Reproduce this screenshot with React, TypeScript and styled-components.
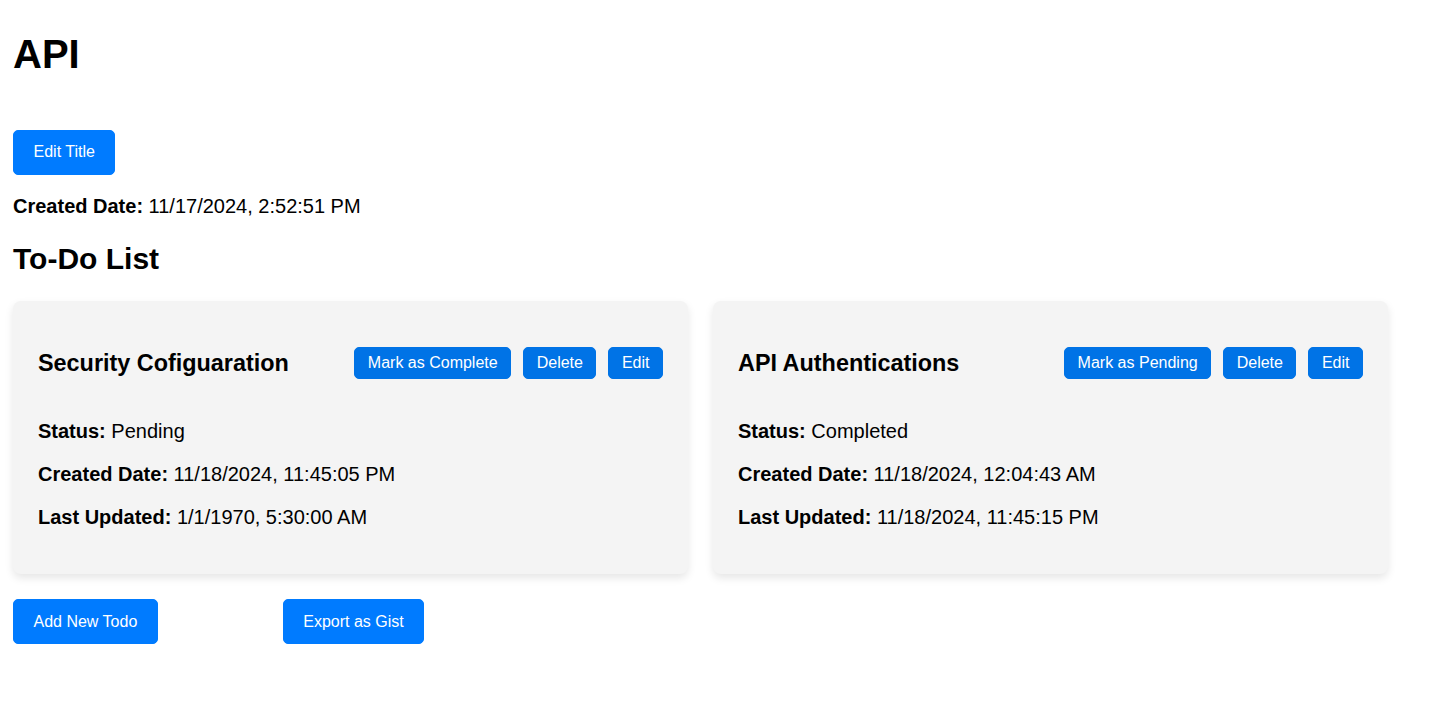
import styled, { createGlobalStyle } from "styled-components";

type Todo = {
  id: number;
  title: string;
  status: "Pending" | "Completed";
  created: string;
  updated: string;
};

const todos: Todo[] = [
  {
    id: 1,
    title: "Security Cofiguaration",
    status: "Pending",
    created: "11/18/2024, 11:45:05 PM",
    updated: "1/1/1970, 5:30:00 AM",
  },
  {
    id: 2,
    title: "API Authentications",
    status: "Completed",
    created: "11/18/2024, 12:04:43 AM",
    updated: "11/18/2024, 11:45:15 PM",
  },
];

function App() {
  return (
    <>
      <GlobalStyle />
      <Page>
        <Title>API</Title>
        <TitleActions>
          <PrimaryButton>Edit Title</PrimaryButton>
        </TitleActions>
        <Info>
          <strong>Created Date:</strong> 11/17/2024, 2:52:51 PM
        </Info>
        <SectionTitle>To-Do List</SectionTitle>
        <TodoGrid>
          {todos.map((todo) => (
            <Card key={todo.id}>
              <CardHeader>
                <CardTitle>{todo.title}</CardTitle>
                <Actions>
                  <SmallButton>
                    {todo.status === "Pending"
                      ? "Mark as Complete"
                      : "Mark as Pending"}
                  </SmallButton>
                  <SmallButton>Delete</SmallButton>
                  <SmallButton>Edit</SmallButton>
                </Actions>
              </CardHeader>
              <Info>
                <strong>Status:</strong> {todo.status}
              </Info>
              <Info>
                <strong>Created Date:</strong> {todo.created}
              </Info>
              <Info>
                <strong>Last Updated:</strong> {todo.updated}
              </Info>
            </Card>
          ))}
        </TodoGrid>
        <Footer>
          <PrimaryButton>Add New Todo</PrimaryButton>
          <PrimaryButton>Export as Gist</PrimaryButton>
        </Footer>
      </Page>
    </>
  );
}

const GlobalStyle = createGlobalStyle`
  body {
    margin: 0;
    background: #fff;
    color: #000;
    font-family: "Liberation Sans", Arial, sans-serif;
    font-size: 20px;
  }
`;

const Page = styled.div`
  padding: 5px 13px 40px;
`;

const Title = styled.h1`
  font-size: 40px;
  margin: 26.8px 0;
`;

const TitleActions = styled.div`
  display: flex;
  padding-top: 26px;
`;

const PrimaryButton = styled.button`
  font-family: "Liberation Sans", Arial, sans-serif;
  font-size: 16px;
  color: #fff;
  background-color: #007bff;
  border: 1px solid #007bff;
  border-radius: 5px;
  padding: 12.5px 19.5px;
  cursor: pointer;
`;

const Info = styled.p`
  margin: 20px 0;
`;

const SectionTitle = styled.h2`
  font-size: 30px;
  margin: 24.9px 0;
`;

const TodoGrid = styled.div`
  display: grid;
  grid-template-columns: repeat(2, 675px);
  gap: 25px;
`;

const Card = styled.div`
  display: flow-root;
  background: #f4f4f4;
  border-radius: 8px;
  padding: 25px;
  box-shadow: 0 4px 8px rgba(0, 0, 0, 0.1);
`;

const CardHeader = styled.div`
  display: flex;
  align-items: center;
  justify-content: space-between;
`;

const CardTitle = styled.h3`
  font-size: 23.4px;
  margin: 23.4px 0;
`;

const Actions = styled.div`
  display: flex;
  gap: 12px;
`;

const SmallButton = styled.button`
  font-family: "Liberation Sans", Arial, sans-serif;
  font-size: 16px;
  color: #fff;
  background-color: #0073e6;
  border: 1px solid #0073e6;
  border-radius: 5px;
  padding: 6px 12.5px;
  cursor: pointer;
`;

const Footer = styled.div`
  display: flex;
  gap: 125px;
  margin-top: 25px;
`;

export default App;
